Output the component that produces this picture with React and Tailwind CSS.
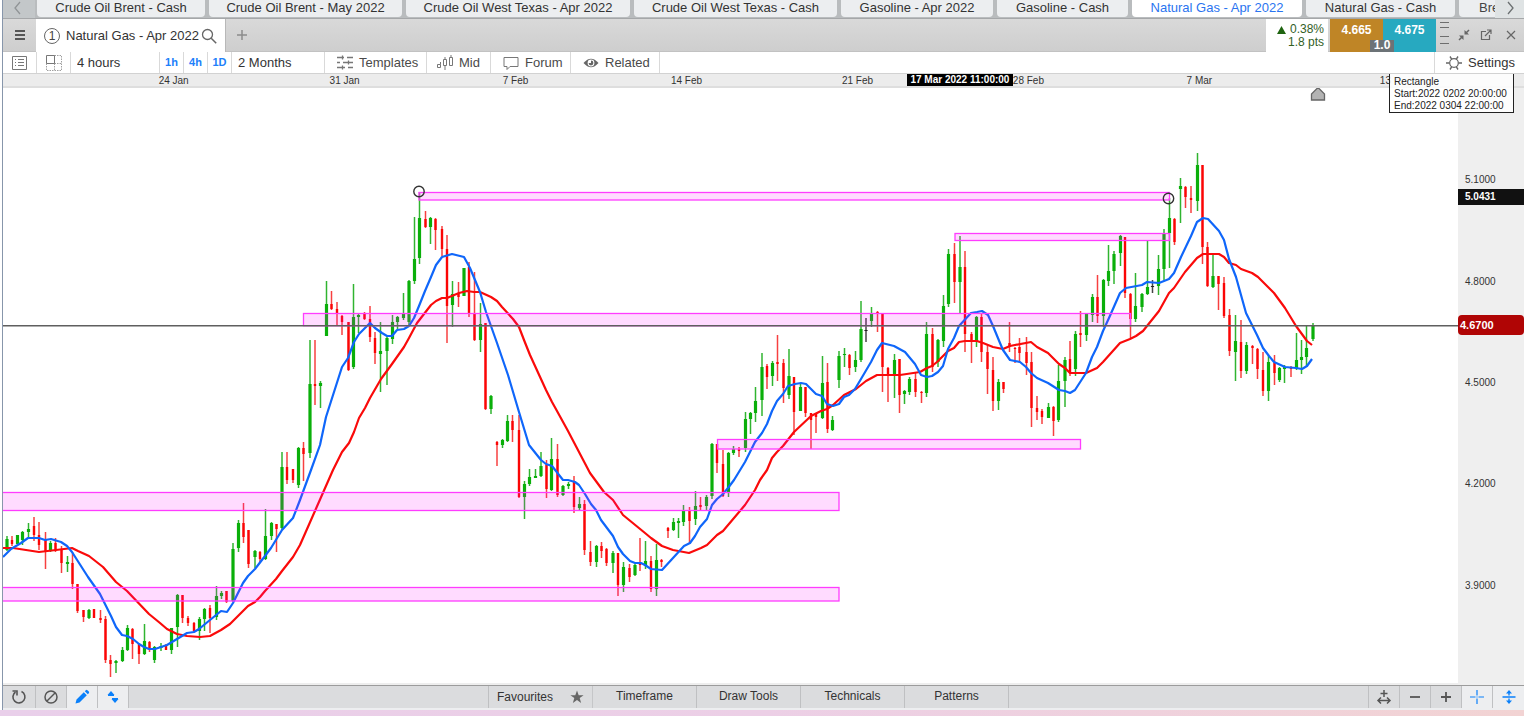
import React from "react";

// Candles: centre x, high, low, body top, body bottom, colour key.
const CANDLES = `7,536,551,539,550,g 12,536,546,540,544,r 17.5,535,544,535,544,g 22.5,531,545,532,540,g 28.5,523,538,529,532,g 34,517,541,526,535,r 39,522,550,535,545,r 45.5,532,569,540,551,r 50.5,541,552,543,551,g 55.5,538,552,543,550,r 61.5,546,573,549,563,r 67.5,556,572,562,564,g 72.5,552,589,563,584,r 77.5,584,613,584,611,r 83.5,610,622,610,617,r 89,609,619,610,618,g 94,609,618,609,618,r 100.5,610,623,618,620,r 105.5,616,663,619,660,r 110.5,655,677,660,664,r 116,660,673,661,663,g 122.5,647,662,650,661,g 127.5,625,651,628,650,g 132.5,628,659,629,644,r 139,644,664,644,654,r 144.5,624,655,641,654,g 149.5,641,652,642,648,r 154.5,646,663,647,660,g 161,643,651,646,648,g 166,644,650,645,650,r 171.5,628,654,628,650,g 177.5,594,647,595,627,g 182.5,595,623,595,618,r 188,616,626,618,623,r 194,622,632,623,631,r 199.5,617,640,619,631,g 204.5,608,631,609,619,g 210,605,633,608,618,r 216.5,586,620,596,617,g 221.5,591,599,593,596,g 226.5,591,603,591,602,r 233,543,602,549,601,g 238.5,520,552,523,548,g 243.5,503,543,523,537,r 248.5,530,568,530,564,r 255,550,568,551,557,g 260,551,563,552,559,r 265.5,509,560,536,559,g 271.5,522,540,523,536,g 276.5,524,552,524,529,r 282,452,530,467,528,g 287,452,484,467,480,r 293,469,483,469,480,r 298.5,447,488,448,485,g 303.5,442,481,448,454,r 310,340,458,384,453,g 315,340,405,384,386,r 320.5,381,408,383,386,g 326.5,281,336,304,336,g 331.5,291,310,304,309,r 337,302,325,309,313,r 342,315,335,316,322,r 348.5,322,371,322,370,r 353.5,284,369,317,367,g 358.5,314,333,315,317,g 364.5,312,320,314,319,r 370,306,342,319,337,r 375,332,364,338,353,r 380.5,322,392,351,354,g 387,336,385,338,351,g 392.5,315,344,322,339,g 397.5,316,329,317,322,g 403.5,293,320,314,318,g 409,280,326,281,322,g 414.5,217,284,259,281,g 419.5,192,264,218,258,g 425.5,211,228,219,227,r 430.5,217,244,218,227,g 435.5,218,250,219,230,r 442,226,256,229,249,r 447,235,343,249,306,r 452.5,281,327,294,305,g 458.5,282,307,293,297,r 464,268,296,268,296,g 469,262,317,267,313,r 474.5,272,341,313,340,r 480.5,303,352,324,340,g 485.5,323,410,323,409,r 491,395,414,396,409,g 497,441,466,442,445,r 502.5,439,448,440,445,g 507.5,415,442,421,441,g 512.5,415,442,421,430,r 519,415,498,430,497,r 524.5,481,519,484,497,g 529.5,469,486,477,484,g 535.5,469,478,476,478,g 541,452,477,466,476,g 546.5,460,498,465,489,r 551.5,438,491,459,490,g 557.5,444,497,459,495,r 563,485,496,486,495,g 568.5,482,489,484,486,g 574,476,513,482,507,r 579.5,497,511,504,508,g 584.5,500,555,504,550,r 590.5,541,566,552,562,r 596.5,545,567,546,562,g 601.5,542,558,546,551,r 606.5,548,566,549,563,r 613,551,573,553,563,g 618,553,596,553,585,r 623.5,562,592,567,585,g 629.5,564,582,568,577,r 635,564,576,565,575,g 640,538,571,563,565,r 645.5,541,569,561,566,g 651,556,592,561,589,r 656.5,544,596,560,589,g 661.5,559,567,560,562,r 668,527,538,528,531,r 673.5,518,531,522,530,g 678.5,518,538,521,523,g 683.5,505,526,511,522,g 689.5,507,544,511,521,r 695.5,491,525,506,519,g 700.5,497,510,505,507,r 706.5,495,510,497,506,g 712,443,499,444,496,g 717,444,473,444,463,r 723,450,497,464,496,r 728.5,452,497,453,492,g 733.5,446,455,449,453,g 739,447,457,449,451,r 745.5,412,452,419,448,g 750.5,412,434,413,419,g 755.5,387,422,401,413,g 762,353,416,367,400,g 767,364,389,366,377,r 772.5,361,386,363,376,g 777.5,335,381,362,364,r 783.5,359,403,363,388,r 789,349,399,376,395,g 794,377,435,377,412,r 800.5,384,411,387,411,g 805.5,387,417,387,413,r 811,413,449,413,420,r 816,413,433,414,417,r 822.5,356,419,383,418,g 827.5,363,433,382,429,r 832.5,416,431,420,430,g 839,351,388,356,380,g 844.5,348,367,354,355,g 849.5,354,375,355,368,r 855.5,351,372,360,367,g 861,301,362,329,360,g 866,318,342,330,331,k 871.5,307,327,314,321,g 877.5,311,332,312,314,r 882.5,313,392,314,367,r 888,367,402,368,375,r 894.5,354,398,360,375,g 899.5,359,413,359,395,r 904.5,390,404,391,394,g 909.5,377,395,379,392,g 915.5,373,397,379,392,r 921.5,391,403,392,393,r 926.5,322,397,334,393,g 932.5,328,372,334,367,r 938,339,367,340,362,g 943.5,295,347,306,341,g 948.5,249,307,254,304,g 954.5,243,303,254,282,r 960,236,313,267,282,g 965,251,352,267,334,r 971.5,332,363,334,341,r 976.5,316,347,317,341,g 981.5,313,362,317,352,r 987.5,345,394,352,369,r 993,357,411,370,401,r 998.5,379,410,382,401,g 1003.5,382,393,382,389,r 1009.5,322,352,343,347,r 1015,347,363,348,349,r 1019.5,338,363,347,353,r 1026.5,337,375,352,363,r 1031.5,352,427,362,408,r 1037,396,420,408,412,r 1042,409,424,411,417,r 1048.5,403,418,407,418,g 1053.5,406,436,407,421,r 1058.5,365,422,381,420,g 1065,357,407,360,381,g 1070,341,376,359,372,r 1075.5,331,376,334,369,g 1080.5,311,347,333,335,r 1086.5,313,341,314,335,g 1092.5,294,322,297,315,g 1097.5,275,323,297,316,r 1103.5,279,327,280,316,g 1108.5,245,286,271,281,g 1114,251,284,254,271,g 1120.5,235,266,236,253,g 1125,237,298,237,293,r 1130.5,293,339,294,319,r 1135.5,273,322,306,319,g 1142,293,312,294,307,g 1147.5,240,295,287,294,g 1152.5,280,293,286,287,k 1158.5,255,295,269,286,g 1164,229,280,234,269,g 1169.5,198,268,218,233,g 1174.5,218,245,219,242,r 1180.5,178,223,186,189,g 1185.5,186,208,187,197,r 1191,186,213,198,200,r 1197.5,153,211,165,201,g 1202.5,165,264,165,247,r 1207.5,242,287,247,286,r 1213,255,288,276,287,g 1218.5,276,310,276,284,r 1224,277,318,283,316,r 1229.5,309,356,315,351,r 1235.5,315,381,341,352,g 1241,320,378,342,371,r 1246.5,342,374,345,371,g 1252.5,345,364,346,348,r 1257.5,348,379,349,369,r 1263,352,396,370,391,r 1268.5,355,401,362,391,g 1274.5,355,385,363,373,r 1279.5,367,382,368,380,g 1284.5,365,383,367,369,g 1291,366,377,368,369,r 1296.5,333,370,360,368,g 1301.5,340,374,357,360,g 1306.5,326,367,348,357,g 1313,323,341,326,339,g`
  .split(" ")
  .map((row) => row.split(","));

const FAST_AVERAGE =
  "3,557 11,549 21,543 28,538 39,538 45,540 51,539 61,542 67,546 72,552 88,577 100,594 111,616 116,627 122,635 127,636 133,639 139,644 144,647 149,649 155,649 167,645 177,639 187,633 194,632 199,629 210,620 221,611 227,612 233,603 243,583 248,576 255,569 265,556 271,548 282,530 293,518 300,500 311,470 320,445 326,417 342,367 348,358 354,342 359,334 370,323 375,328 382,333 387,336 392,336 397,330 404,329 409,326 414,318 419,306 425,291 431,277 436,265 442,257 452,254 464,257 470,268 480,292 486,312 497,343 508,375 519,412 529,445 541,460 546,464 552,466 563,480 568,480 575,482 579,485 585,494 591,504 596,510 601,520 613,536 618,547 623,554 630,561 635,563 641,563 645,565 651,569 662,570 673,558 684,546 690,543 695,536 700,527 707,519 712,505 717,499 723,494 728,488 734,480 745,462 755,442 762,433 767,424 772,411 777,401 783,394 788,386 795,384 801,383 806,384 816,394 822,396 827,404 833,406 839,404 844,397 849,395 855,389 861,379 871,362 877,350 882,343 894,346 905,352 915,364 921,375 927,377 932,376 938,372 943,366 948,349 954,338 959,326 971,313 977,312 982,311 988,315 993,326 1000,343 1003,350 1010,360 1020,362 1026,367 1031,373 1037,378 1048,383 1059,390 1065,391 1070,393 1075,390 1086,373 1092,357 1097,347 1103,331 1109,318 1120,293 1126,288 1142,285 1147,282 1159,283 1169,279 1174,273 1181,257 1191,236 1197,222 1203,218 1208,219 1219,231 1224,240 1229,259 1236,277 1246,313 1257,335 1263,348 1269,356 1274,362 1285,367 1296,368 1302,369 1307,366 1312,359";

const SLOW_AVERAGE =
  "3,548 13,548 39,552 56,550 72,548 78,551 89,556 103,567 116,582 127,591 149,614 160,623 167,629 177,634 187,636 200,637 210,636 221,630 230,624 248,606 255,602 260,597 265,591 276,579 282,571 293,557 300,545 333,470 342,452 349,443 354,432 359,418 365,408 370,398 381,379 392,364 404,347 409,338 417,323 431,305 436,301 442,298 447,298 459,293 467,291 474,292 480,292 491,297 497,301 502,307 513,319 519,327 524,340 530,355 546,390 552,402 557,411 568,431 590,473 604,492 613,500 623,515 645,533 651,538 662,546 673,550 689,553 701,548 707,545 717,535 723,531 745,505 755,490 760,480 767,470 772,458 777,452 783,446 794,432 811,416 821,411 827,409 833,405 844,395 856,389 866,381 877,375 900,375 920,372 927,368 932,366 937,362 948,351 954,348 959,342 965,341 977,341 983,343 993,347 1003,349 1010,346 1031,342 1037,347 1048,353 1059,364 1065,368 1070,373 1086,373 1097,368 1103,362 1120,343 1130,339 1136,336 1143,331 1159,311 1169,293 1174,288 1185,272 1197,258 1203,254 1219,254 1224,257 1229,263 1236,265 1241,269 1252,273 1258,277 1268,287 1274,293 1285,308 1296,326 1307,341 1312,345";

// Zones: left, top, right, bottom.
const ZONES = [
  [419, 192.5, 1169.5, 200],
  [955, 233.5, 1169.5, 240.5],
  [303.5, 313.5, 1130.5, 325.7],
  [717.5, 439.5, 1080.5, 449],
  [-5, 492.5, 839, 510.5],
  [-5, 587.5, 839, 601],
];

const FILL = { g: "#0aaf0a", r: "#fb0505", k: "#222222" };
const WICK = { g: "#30b430", r: "#f74040", k: "#444444" };

const TABS = [
  ["Crude Oil Brent - Cash", "w-[168px]"],
  ["Crude Oil Brent - May 2022", "w-[193px]"],
  ["Crude Oil West Texas - Apr 2022", "w-[224px]"],
  ["Crude Oil West Texas - Cash", "w-[203px]"],
  ["Gasoline - Apr 2022", "w-[152px]"],
  ["Gasoline - Cash", "w-[131px]"],
  ["Natural Gas - Apr 2022", "w-[170px]"],
  ["Natural Gas - Cash", "w-[149px]"],
];

const DATES = ["24 Jan", "31 Jan", "7 Feb", "14 Feb", "21 Feb", "28 Feb", "7 Mar"];
const PRICES = ["5.1000", "4.8000", "4.5000", "4.2000", "3.9000"];

function Icon({ className = "", w = 16, h = 16, children }) {
  return (
    <svg
      width={w}
      height={h}
      viewBox={`0 0 ${w} ${h}`}
      fill="none"
      stroke="currentColor"
      aria-hidden="true"
      className={`shrink-0 ${className}`}
    >
      {children}
    </svg>
  );
}

function MarketTabs() {
  return (
    <nav className="flex h-[19px] shrink-0 border-b border-[#a5a7a9] bg-[#b9bcbe]">
      <button aria-label="Previous markets" className="flex w-8 shrink-0 items-start justify-center bg-[#c3c7c9] text-[#909496]">
        <Icon>
          <path d="M9 2 4 8l5 6" strokeWidth="1.3" />
        </Icon>
      </button>
      <div className="flex min-w-0 flex-1 gap-1 overflow-hidden pl-0.5">
        {TABS.map(([name, width], i) => (
          <button
            key={name}
            className={`${width} h-[17px] shrink-0 whitespace-nowrap rounded-b pb-px text-[13px] leading-[14px] ${
              i === 6 ? "bg-white text-[#2a74f0]" : "bg-[#eceef0] text-[#333]"
            }`}
          >
            {name}
          </button>
        ))}
        <button className="h-[17px] w-32 shrink-0 rounded-b bg-[#eceef0] pb-px pl-5 text-left text-[13px] leading-[14px] text-[#444]">
          Bre
        </button>
      </div>
      <button aria-label="More markets" className="flex w-[29px] shrink-0 items-start justify-center bg-[#dfe3e4] text-[#6b6f71]">
        <Icon>
          <path d="m6 2 5 6-5 6" strokeWidth="1.3" />
        </Icon>
      </button>
    </nav>
  );
}

function TitleBar() {
  return (
    <header className="flex h-[33px] shrink-0 border-b border-[#c2c2c2] bg-linear-to-b from-[#d9d9d9] to-[#cecece] text-[#555]">
      <button aria-label="Menu" className="flex w-[33px] items-center justify-center">
        <Icon w={12} h={12}>
          <path d="M1 2h10M1 6h10M1 10h10" strokeWidth="2" />
        </Icon>
      </button>
      <div className="-mb-px flex w-[190px] items-center border-r border-[#b8b8b8] bg-white pl-2">
        <span className="flex size-4 items-center justify-center rounded-full border border-[#666] text-xs text-[#444]">1</span>
        <h1 className="ml-1.5 whitespace-nowrap text-[13px] text-[#333]">Natural Gas - Apr 2022</h1>
        <button aria-label="Search" className="ml-0.5 text-[#666]">
          <Icon>
            <circle cx="6.5" cy="6.5" r="5" strokeWidth="1.3" />
            <path d="m10.200 10.200 5 5" strokeWidth="1.5" />
          </Icon>
        </button>
      </div>
      <button aria-label="Add tab" className="flex w-8 items-center justify-center text-[#8c8c8c]">
        <Icon w={12} h={12}>
          <path d="M6 1v10M1 6h10" strokeWidth="1.5" />
        </Icon>
      </button>
      <div className="flex-1" />
      <div className="-mb-px w-[62px] bg-white pr-1 pt-1 text-right text-xs leading-[13px] text-[#33601f]">
        <p className="flex items-center justify-end gap-1">
          <Icon w={9} h={8}>
            <path d="M4.500 0 9 8H0z" fill="#1f6410" stroke="none" />
          </Icon>
          0.38%
        </p>
        <p>1.8 pts</p>
      </div>
      <div className="relative -mb-px ml-0.5 flex text-xs font-bold leading-[22px] text-white">
        <button className="flex w-[53px] justify-center bg-[#bf8526]">4.665</button>
        <button className="flex w-[53px] justify-center bg-[#27a9c0]">4.675</button>
        <span className="absolute bottom-0 left-10 h-3 w-6 bg-[#6c7377] text-center text-xs leading-[11px]">1.0</span>
      </div>
      <Icon w={9} h={32} className="ml-1 text-[#6e6e6e]">
        <path d="M0 3.500h9M0 8.500h9M0 17.500h9M0 24.500h9" />
      </Icon>
      <div className="flex max-w-[75px] flex-1 items-center justify-end gap-2.5 pr-2 text-[#666]">
        <button aria-label="Shrink">
          <Icon w={12} h={12}>
            <path d="m11 1-3 3M1 11l3-3" strokeWidth="1.500" />
            <path d="M6.500 1v4.500H11zM1 6.500h4.500V11z" fill="currentColor" stroke="none" />
          </Icon>
        </button>
        <button aria-label="Open in new window">
          <Icon w={12} h={12}>
            <path d="M6 2.500H1.500v8h8V6M5 7l5.500-5.500M7 1h4v4" strokeWidth="1.200" />
          </Icon>
        </button>
        <button aria-label="Close" className="ml-1">
          <Icon w={10} h={10}>
            <path d="m1 1 8 8M9 1 1 9" strokeWidth="1.200" />
          </Icon>
        </button>
      </div>
    </header>
  );
}

const CELL = "flex h-full shrink-0 items-center border-r border-[#d9d9d9]";

function Toolbar() {
  return (
    <div className="flex h-[22px] shrink-0 items-center border-b border-[#d2d2d2] bg-white text-[13px] text-[#4a4a4a]">
      <button aria-label="List view" className={`${CELL} w-[34px] justify-center text-[#777]`}>
        <Icon w={15} h={14}>
          <path d="M.5.5h14v13H.5zM3 3.500h1M6 3.500h6M3 6.500h1M6 6.500h6M3 9.500h1M6 9.500h6" />
        </Icon>
      </button>
      <button aria-label="Layout" className={`${CELL} w-[34px] justify-center text-[#777]`}>
        <Icon w={16} h={16}>
          <path d="M.5.5h8v8h-8z" />
          <path d="M8.500.5h7v15H.5v-7M8.500 8.500h7M8.500 8.500v7" strokeDasharray="1.500 1" opacity="0.7" />
        </Icon>
      </button>
      <select aria-label="Interval" className={`${CELL} w-[89px] appearance-none bg-white pl-1.5 text-[#333]`}>
        <option>4 hours</option>
      </select>
      {["1h", "4h", "1D"].map((label) => (
        <button key={label} className={`${CELL} w-6 justify-center text-[11px] font-bold text-[#2080fa]`}>
          {label}
        </button>
      ))}
      <select aria-label="Range" className={`${CELL} w-[93px] appearance-none bg-white pl-1.5 text-[#333]`}>
        <option>2 Months</option>
      </select>
      <button className={`${CELL} w-[102px] gap-1.5 pl-3`}>
        <Icon>
          <path
            d="M0 2.500h7M10 2.500h6M0 7.500h3M6 7.500h10M0 12.500h8M11 12.500h5M5.500.5v4M11.500 5.500v4M5.500 10.500v4"
            stroke="#777"
            strokeWidth="1.300"
          />
        </Icon>
        Templates
      </button>
      <button className={`${CELL} w-16 gap-1.5 pl-2.5`}>
        <Icon>
          <path d="M.5 9.500h3v3h-3zM3.500 7v2.500M6.500 4.500h3v6h-3zM8 2v2.500M8 10.500V15M12.500 2.500h3v8h-3zM14 0v2.500" stroke="#777" />
        </Icon>
        Mid
      </button>
      <button className={`${CELL} w-20 gap-1.5 pl-3`}>
        <Icon>
          <path d="M1 2.500h14v9H7l-3 3v-3H1z" stroke="#777" strokeLinejoin="round" />
        </Icon>
        Forum
      </button>
      <button className={`${CELL} w-[89px] gap-1.5 pl-3`}>
        <Icon>
          <path d="M.5 8Q8-.5 15.500 8 8 16.500.5 8z" fill="#666" stroke="none" />
          <circle cx="8" cy="8" r="3.400" fill="#fff" stroke="none" />
          <path d="M8 5.600A2.400 2.400 0 1 1 5.600 8H8z" fill="#666" stroke="none" />
        </Icon>
        Related
      </button>
      <div className="flex-1" />
      <button className="flex h-full w-[90px] shrink-0 items-center gap-1.5 border-l border-[#d9d9d9] pl-[11px] text-[#333]">
        <Icon>
          <circle cx="8" cy="8" r="4.300" stroke="#666" strokeWidth="1.200" />
          <path d="M0 8h3.500M12.500 8H16M4 1.500l1.800 2.800M12 1.500l-1.800 2.800M4 14.500l1.800-2.800M12 14.500l-1.800-2.800" stroke="#666" strokeWidth="1.400" />
        </Icon>
        Settings
      </button>
    </div>
  );
}

function DateAxis() {
  return (
    <div className="relative flex h-[14px] shrink-0 border-b-2 border-[#dedede] bg-[#ececec] text-[10px] leading-[14px] text-[#333]">
      <div className="w-[5.600%]" />
      {DATES.map((d) => (
        <span key={d} className="w-[11.240%] whitespace-nowrap text-center">
          {d}
        </span>
      ))}
      <span className="flex-1 pl-[95px]">13</span>
      <span className="absolute left-[59.430%] top-0 h-3 w-[106px] bg-black text-center font-bold leading-[11px] text-white">
        17 Mar 2022 11:00:00
      </span>
      <div className="absolute right-2.5 top-0 z-10 w-[125px] whitespace-nowrap border border-t-0 border-[#222] bg-white/85 pl-1 pt-[2px] text-[10px] leading-3 text-[#222]">
        <p>Rectangle</p>
        <p>Start:2022 0202 20:00:00</p>
        <p>End:2022 0304 22:00:00</p>
      </div>
    </div>
  );
}

function Chart() {
  return (
    <svg
      viewBox="3 88 1455 595"
      preserveAspectRatio="none"
      role="img"
      aria-label="Natural Gas four hour candlestick chart"
      className="block h-full w-full bg-white"
    >
      {CANDLES.map(([x, high, low, top, bottom, key]) => (
        <g key={x}>
          <path d={`M${x} ${high}V${low}`} stroke={WICK[key]} strokeWidth="1.5" />
          <path
            d={`M${x} ${top}V${bottom}`}
            stroke={FILL[key]}
            strokeWidth={key === "r" ? 2.4 : 3.2}
          />
        </g>
      ))}
      <polyline points={SLOW_AVERAGE} fill="none" stroke="#fa0a0a" strokeWidth="2.2" strokeLinejoin="round" />
      <polyline points={FAST_AVERAGE} fill="none" stroke="#0f66fa" strokeWidth="2.2" strokeLinejoin="round" />
      {ZONES.map(([l, t, r, b]) => (
        <rect key={t} x={l} y={t} width={r - l} height={b - t} fill="#ff00ff" fillOpacity="0.14" stroke="#ff3cff" strokeWidth="1.3" />
      ))}
      <path d="M3 325.800H1458" stroke="#5f5f5f" strokeWidth="1.500" />
      <path d="M1311.500 100V94l6.500-6.500 6.500 6.500v6z" fill="#b3b3b3" stroke="#666" strokeWidth="1.300" />
      <g fill="none" stroke="#333" strokeWidth="1.400">
        <circle cx="419" cy="191.500" r="5.200" />
        <circle cx="1168.500" cy="198.500" r="5.200" />
      </g>
    </svg>
  );
}

function PriceAxis() {
  return (
    <div className="relative flex w-[66px] shrink-0 flex-col bg-[#efefef] text-[10px] text-[#333]">
      <div className="grow-[41]" />
      {PRICES.map((p) => (
        <span key={p} className="flex min-h-0 grow-[101] basis-0 items-center pl-[7px]">
          {p}
        </span>
      ))}
      <div className="grow-[49]" />
      <span className="absolute inset-x-0 top-[17%] h-4 bg-[#111] pl-[7px] font-bold leading-4 text-white">5.0431</span>
      <span className="absolute inset-x-0 top-[38%] h-5 rounded-sm bg-[#b00505] pl-0.5 text-[11px] font-bold leading-5 text-white">4.6700</span>
    </div>
  );
}

const FOOT = "flex h-full w-[31px] shrink-0 items-center justify-center border-r border-[#bfc0c2]";
const FOOT_ON = "bg-[#edeef0] text-[#0a80fa]";

function BottomBar() {
  return (
    <footer className="flex h-[25px] shrink-0 items-center border-b-2 border-t border-b-[#edeef0] border-t-[#9c9c9c] bg-[#dbdcde] text-[#555]">
      <button aria-label="Reset" className={`${FOOT} w-[33px]`}>
        <Icon>
          <path d="M10.500 2.500A6 6 0 1 1 4.500 3" strokeWidth="1.600" />
          <path d="M1.500 2h4.500v4.500" strokeWidth="1.600" />
        </Icon>
      </button>
      <button aria-label="Clear" className={FOOT}>
        <Icon>
          <circle cx="8" cy="8" r="6" strokeWidth="1.500" />
          <path d="m4 12 8-8" strokeWidth="1.500" />
        </Icon>
      </button>
      <button aria-label="Draw" className={`${FOOT} ${FOOT_ON}`}>
        <Icon>
          <path
            d="m1.500 14.500 1-4L9.800 3.200l3 3L5.500 13.500zM10.800 2.200l1-1q.8-.8 1.600 0l1.400 1.400q.8.800 0 1.600l-1 1z"
            fill="currentColor"
            stroke="none"
          />
        </Icon>
      </button>
      <button aria-label="Auto scale" className={`${FOOT} ${FOOT_ON}`}>
        <Icon w={12} h={14}>
          <path d="M4 1l3.500 4H.5zM1 5h6v1H1zM8 13l3.500-4h-7zM5 8h6v1H5z" fill="currentColor" stroke="none" />
        </Icon>
      </button>
      <div className="h-full flex-1 border-r border-[#bfc0c2]" />
      <div className="flex h-full text-xs text-[#333]">
        <button className="flex w-[104px] items-center justify-between border-r border-[#c5c6c8] pl-2 pr-2">
          Favourites
          <Icon w={14} h={14}>
            <path d="M7 .5 8.700 5.200h4.900L9.700 8.100l1.400 4.900L7 10.100 2.900 13l1.400-4.900L.4 5.200h4.900z" fill="#666" stroke="none" />
          </Icon>
        </button>
        {["Timeframe", "Draw Tools", "Technicals", "Patterns"].map((label) => (
          <button key={label} className="w-[104px] border-r border-[#bfc0c2] pb-0.5">
            {label}
          </button>
        ))}
      </div>
      <div className="h-full flex-1 border-r border-[#bfc0c2]" />
      <button aria-label="Fit width" className={FOOT}>
        <Icon>
          <path d="M8 1v7M4.500 4.500h7M2 11.500h12M5 8.500l-3 3 3 3M11 8.500l3 3-3 3" strokeWidth="1.500" />
        </Icon>
      </button>
      <button aria-label="Zoom out" className={FOOT}>
        <Icon w={12} h={12}>
          <path d="M1 6h10" strokeWidth="1.800" />
        </Icon>
      </button>
      <button aria-label="Zoom in" className={FOOT}>
        <Icon w={12} h={12}>
          <path d="M6 1v10M1 6h10" strokeWidth="1.800" />
        </Icon>
      </button>
      <button aria-label="Crosshair" className={`${FOOT} ${FOOT_ON}`}>
        <Icon w={14} h={14}>
          <path d="M7 0v5.500M7 8.500V14M0 7h5.500M8.500 7H14M6.500 7h1" strokeWidth="1.200" />
        </Icon>
      </button>
      <button aria-label="Fit height" className={`flex h-full w-[31px] items-center justify-center ${FOOT_ON}`}>
        <Icon w={14} h={14}>
          <path d="M.5 7h13M7 2v3.500M7 8.500V12" strokeWidth="1.400" />
          <path d="m7 0 3 3.500H4zM7 14l3-3.500H4z" fill="currentColor" stroke="none" />
        </Icon>
      </button>
    </footer>
  );
}

export default function App() {
  return (
    <div className="flex h-screen min-h-96 flex-col bg-white pl-0.5 font-['Liberation_Sans',Arial,sans-serif]">
      <div className="flex min-h-0 flex-1 flex-col border-l border-[#8796ab]">
        <MarketTabs />
        <TitleBar />
        <Toolbar />
        <DateAxis />
        <main className="flex min-h-0 flex-1">
          <div className="min-w-0 flex-1 border-b-2 border-[#eeeeee]">
            <Chart />
          </div>
          <PriceAxis />
        </main>
        <BottomBar />
      </div>
      <div className="-ml-0.5 h-1.5 shrink-0 bg-linear-to-r from-[#e9cfea] via-[#eccfe6] to-[#f2d3d3]" />
    </div>
  );
}
